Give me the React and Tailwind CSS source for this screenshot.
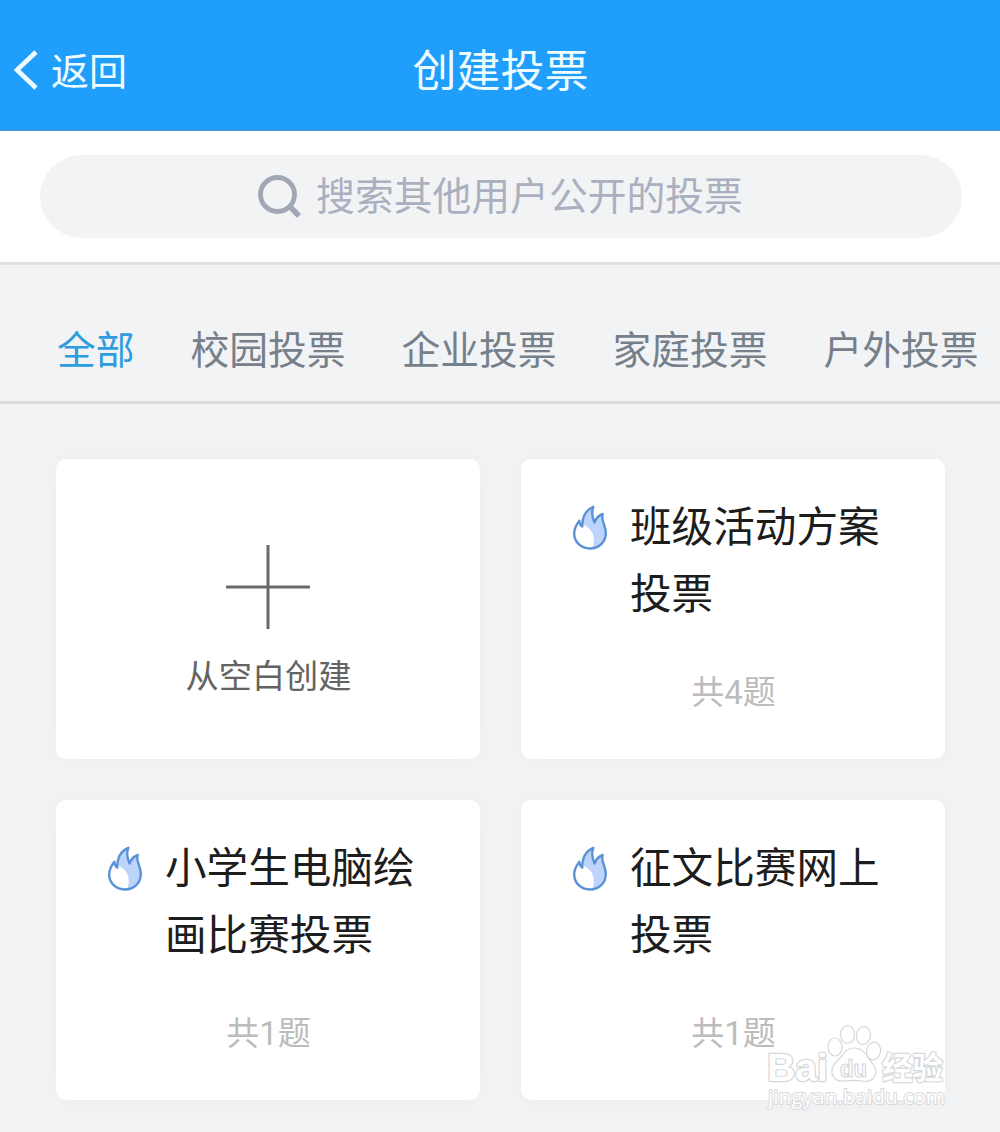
const tabs = ['全部', '校园投票', '企业投票', '家庭投票', '户外投票'];

const polls = [
  { lines: ['班级活动方案', '投票'], count: '共4题' },
  { lines: ['小学生电脑绘', '画比赛投票'], count: '共1题' },
  { lines: ['征文比赛网上', '投票'], count: '共1题' },
];

const flameOutline =
  'M18 43.500C9 43.500 2.200 37 2.200 28.500C2.200 23 4.500 19.500 7.300 15.800C7.300 18 8 20 10.300 21.500C10 12 14 5 21.300 1.800C19.300 7 20 12 22.500 17.500C24 13 26.500 10.500 30.700 9C28.500 15 33.800 20 33.800 28C33.800 37 27 43.500 18 43.500Z';

function Flame() {
  return (
    <svg className="mt-[11px] h-[46px] w-[36px] shrink-0" viewBox="0 0 36 46">
      <path d={flameOutline} fill="#fff" />
      <path d="M20 43.400C24 34 22 25 11.500 19.500C11.500 11 15 5 21.300 1.800C19.300 7 20 12 22.500 17.500C24 13 26.500 10.500 30.700 9C28.500 15 33.800 20 33.800 28C33.800 36.500 28 43 20 43.400Z" fill="#bdd5fc" />
      <path d={flameOutline} fill="none" stroke="#5a92d8" strokeWidth="2.400" strokeLinejoin="round" />
    </svg>
  );
}

function PollCard({ lines, count }) {
  return (
    <div className="flex flex-col rounded-[10px] bg-white pt-[35px] shadow-[0_0_24px_rgba(0,0,0,0.035)]">
      <div className="flex gap-[22px] pl-[51px]">
        <Flame />
        <div className="text-[41.600px] leading-[67px] whitespace-nowrap text-[#1d1d1d]">
          {lines.map((line) => (
            <div key={line}>{line}</div>
          ))}
        </div>
      </div>
      <div className="mt-[45px] pl-px text-center text-[33px] leading-[40px] text-[#bcbcbc]">{count}</div>
    </div>
  );
}

function Watermark() {
  return (
    <svg className="absolute top-[1020px] left-[760px] h-[95px] w-[190px]" viewBox="0 0 190 95" fill="#fff" stroke="#d6d7d9" strokeWidth="1.200">
      <g paintOrder="stroke" strokeWidth="2.400" strokeLinejoin="round">
        <text x="7" y="61" fontSize="38" textLength="61" lengthAdjust="spacingAndGlyphs" className="font-['Liberation_Sans',sans-serif] font-bold">Bai</text>
        <text x="122" y="58.500" fontSize="31" textLength="61" lengthAdjust="spacingAndGlyphs" className="font-['Noto_Sans_CJK_SC',sans-serif] font-bold">经验</text>
        <text x="8" y="84" fontSize="19.500" textLength="177" lengthAdjust="spacingAndGlyphs" strokeWidth="1.800" className="font-['Open_Sans',sans-serif] font-medium">jingyan.baidu.com</text>
      </g>
      <ellipse cx="75" cy="27" rx="7" ry="9" />
      <ellipse cx="87.500" cy="14.500" rx="7" ry="9" />
      <ellipse cx="103.500" cy="15.500" rx="7" ry="9" transform="rotate(10 103.500 15.500)" />
      <ellipse cx="113.500" cy="31" rx="7" ry="9" transform="rotate(10 113.500 31)" />
      <path d="M94 28C87 28 84 33 80 38C75 43 71 47 72 53C73 59 78 62 84 61C91 60 96 60 103 61C111 63 116 57 116 51C116 45 110 42 107 36C104 31 100 28 94 28Z" />
      <text x="80" y="56.500" fontSize="23" textLength="27" lengthAdjust="spacingAndGlyphs" className="font-['Liberation_Sans',sans-serif] font-bold">du</text>
    </svg>
  );
}

export default function App() {
  return (
    <div className="relative h-[1132px] w-[1000px] overflow-hidden bg-[#f2f3f5] font-['Roboto','Noto_Sans_CJK_SC',sans-serif]">
      <header className="grid h-[131px] grid-cols-[1fr_auto_1fr] items-center border-b border-[#4f94d0] bg-[#1f9efb] pt-[14px] text-[#effcff]">
        <div className="flex items-center gap-[13px] pl-[13px]">
          <svg className="mb-[5px] h-[40px] w-[25px]" viewBox="0 0 25 40" fill="none" stroke="currentColor" strokeWidth="4.600">
            <path d="M23 2L4 20L23 38" />
          </svg>
          <span className="text-[38px] leading-[56px]">返回</span>
        </div>
        <h1 className="pl-px text-[44px] leading-[64px]">创建投票</h1>
        <div />
      </header>

      <div className="h-[134px] border-b-[3px] border-[#e1e2e4] bg-white pt-[24px] pl-[40px]">
        <div className="flex h-[83px] w-[922px] items-center justify-center gap-[15px] rounded-full bg-[#f2f3f5] pr-[2px] text-[#aab0bf]">
          <svg className="h-[43px] w-[44px]" viewBox="0 0 44 43" fill="none" stroke="#a1a8b5" strokeWidth="4.800">
            <circle cx="20.500" cy="19.500" r="17" />
            <path d="M32 30.500L42 41" strokeWidth="5.500" />
          </svg>
          <span className="text-[38.800px] leading-[56px]">搜索其他用户公开的投票</span>
        </div>
      </div>

      <nav className="flex h-[139px] items-center gap-[56px] border-b-[3px] border-[#d8d9da] pt-[36px] pl-[57px] text-[38.750px] leading-[56px] whitespace-nowrap text-[#76808a]">
        {tabs.map((tab, i) => (
          <span key={tab} className={i === 0 ? 'text-[#2d9ce0]' : ''}>{tab}</span>
        ))}
      </nav>

      <main className="grid grid-cols-[424px_424px] auto-rows-[300px] gap-x-[41px] gap-y-[41px] pt-[55px] pl-[56px]">
        <div className="flex flex-col items-center rounded-[10px] bg-white pt-[86px] shadow-[0_0_24px_rgba(0,0,0,0.035)]">
          <svg className="h-[84px] w-[84px]" viewBox="0 0 84 84" stroke="#6a6a6a" strokeWidth="3">
            <path d="M0 42H84M42 0V84" />
          </svg>
          <span className="mt-[24px] pl-px text-[33.200px] leading-[48px] text-[#636363]">从空白创建</span>
        </div>
        {polls.map((poll) => (
          <PollCard key={poll.lines[0]} {...poll} />
        ))}
      </main>
      <Watermark />
    </div>
  );
}
